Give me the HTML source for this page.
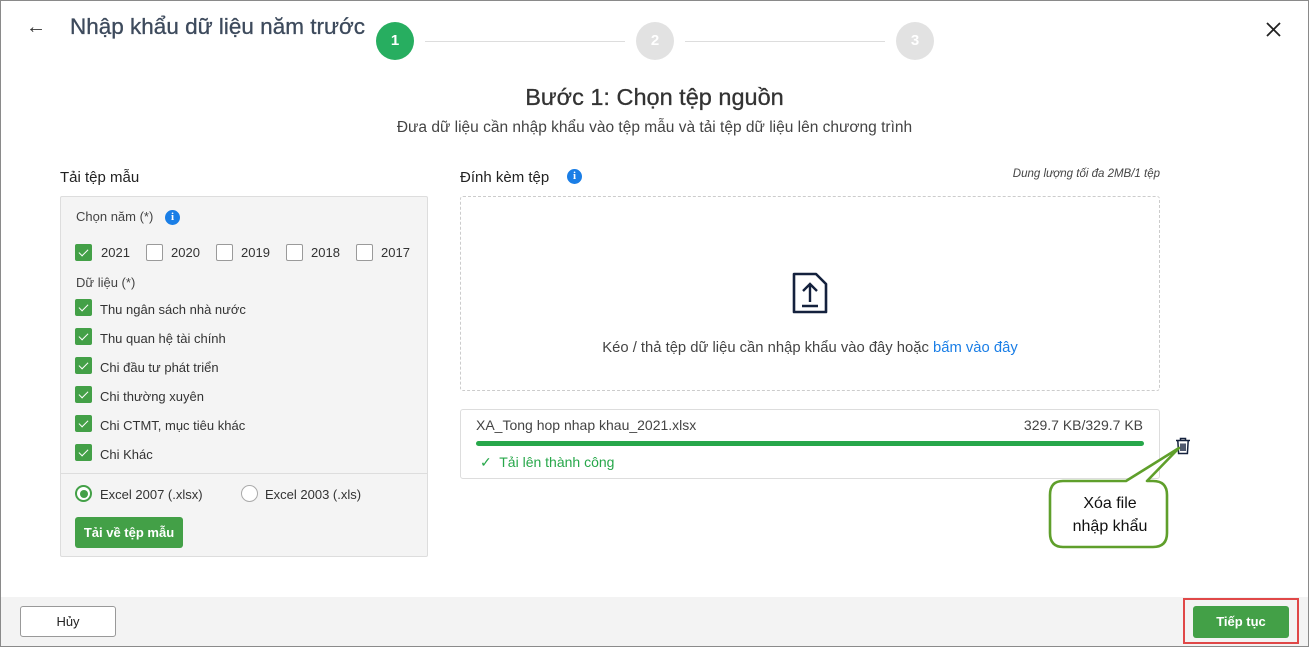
<!DOCTYPE html>
<html><head><meta charset="utf-8"><style>
*{box-sizing:border-box;margin:0;padding:0}
body{width:1309px;height:647px;position:relative;font-family:"Liberation Sans",Roboto,sans-serif;background:#fff;color:#333;overflow:hidden}
.a{position:absolute}
.frame{left:0;top:0;width:1309px;height:647px;border:1px solid #8a8a8a}
.cb{position:absolute;width:17px;height:17px;border-radius:2px;border:1px solid #9a9a9a;background:#fff}
.cb.on{background:#43a047;border-color:#43a047}
.cb.on::after{content:"";position:absolute;left:5px;top:2px;width:4px;height:8px;border:solid #fff;border-width:0 1.5px 1.5px 0;transform:rotate(45deg)}
.t13{font-size:13px;color:#333}
.circ{position:absolute;width:38px;height:38px;border-radius:50%;color:#fff;font-weight:bold;font-size:15px;text-align:center;line-height:38px}
.info{position:absolute;width:15px;height:15px;border-radius:50%;background:#1a7ee6;color:#fff;font-size:11px;font-weight:bold;text-align:center;line-height:15px;font-family:"Liberation Serif",serif}
</style></head><body>
<div class="a frame"></div>
<div class="a" style="left:26px;top:16px;font-size:20px;color:#333">←</div>
<div class="a" style="left:70px;top:14px;font-size:22.5px;color:#3d4a5c;-webkit-text-stroke:0.3px #3d4a5c">Nhập khẩu dữ liệu năm trước</div>
<div class="circ" style="left:376px;top:22px;background:#27ae60">1</div>
<div class="a" style="left:425px;top:41px;width:200px;height:1px;background:#ddd"></div>
<div class="circ" style="left:636px;top:22px;background:#e2e2e2">2</div>
<div class="a" style="left:685px;top:41px;width:200px;height:1px;background:#ddd"></div>
<div class="circ" style="left:896px;top:22px;background:#e2e2e2">3</div>
<svg class="a" style="left:1265px;top:21px" width="17" height="17"><path d="M2 2L15 15M15 2L2 15" stroke="#222" stroke-width="1.8"/></svg>

<div class="a" style="left:0;width:1309px;top:84px;text-align:center;font-size:23.5px;color:#333;-webkit-text-stroke:0.3px #333">Bước 1: Chọn tệp nguồn</div>
<div class="a" style="left:0;width:1309px;top:119px;text-align:center;font-size:15.5px;color:#444">Đưa dữ liệu cần nhập khẩu vào tệp mẫu và tải tệp dữ liệu lên chương trình</div>

<div class="a" style="left:60px;top:169px;font-size:15px;color:#222">Tải tệp mẫu</div>
<div class="a" style="left:60px;top:196px;width:368px;height:361px;background:#f4f4f4;border:1px solid #ddd;border-radius:2px"></div>
<div class="a t13" style="left:76px;top:209px;color:#444">Chọn năm (*)</div>
<div class="info" style="left:165px;top:210px">i</div>
<div class="cb on" style="left:75px;top:244px"></div><div class="a t13" style="left:101px;top:245px">2021</div>
<div class="cb" style="left:146px;top:244px"></div><div class="a t13" style="left:171px;top:245px">2020</div>
<div class="cb" style="left:216px;top:244px"></div><div class="a t13" style="left:241px;top:245px">2019</div>
<div class="cb" style="left:286px;top:244px"></div><div class="a t13" style="left:311px;top:245px">2018</div>
<div class="cb" style="left:356px;top:244px"></div><div class="a t13" style="left:381px;top:245px">2017</div>
<div class="a t13" style="left:76px;top:275px;color:#444">Dữ liệu (*)</div>
<div class="cb on" style="left:75px;top:299px"></div><div class="a t13" style="left:100px;top:302px">Thu ngân sách nhà nước</div>
<div class="cb on" style="left:75px;top:328px"></div><div class="a t13" style="left:100px;top:331px">Thu quan hệ tài chính</div>
<div class="cb on" style="left:75px;top:357px"></div><div class="a t13" style="left:100px;top:360px">Chi đầu tư phát triển</div>
<div class="cb on" style="left:75px;top:386px"></div><div class="a t13" style="left:100px;top:389px">Chi thường xuyên</div>
<div class="cb on" style="left:75px;top:415px"></div><div class="a t13" style="left:100px;top:418px">Chi CTMT, mục tiêu khác</div>
<div class="cb on" style="left:75px;top:444px"></div><div class="a t13" style="left:100px;top:447px">Chi Khác</div>
<div class="a" style="left:61px;top:473px;width:366px;height:1px;background:#ddd"></div>
<div class="a" style="left:75px;top:485px;width:17px;height:17px;border-radius:50%;border:2px solid #43a047;background:#fff"><div style="position:absolute;left:2.5px;top:2.5px;width:8px;height:8px;border-radius:50%;background:#43a047"></div></div>
<div class="a t13" style="left:100px;top:487px">Excel 2007 (.xlsx)</div>
<div class="a" style="left:241px;top:485px;width:17px;height:17px;border-radius:50%;border:1px solid #aaa;background:#fff"></div>
<div class="a t13" style="left:265px;top:487px">Excel 2003 (.xls)</div>
<div class="a" style="left:75px;top:517px;width:108px;height:31px;background:#43a047;border-radius:3px;color:#fff;font-size:13px;font-weight:bold;text-align:center;line-height:31px">Tải về tệp mẫu</div>

<div class="a" style="left:460px;top:169px;font-size:15px;color:#222">Đính kèm tệp</div>
<div class="info" style="left:567px;top:169px">i</div>
<div class="a" style="left:860px;width:300px;top:168px;text-align:right;font-size:11.5px;font-style:italic;color:#444">Dung lượng tối đa 2MB/1 tệp</div>
<div class="a" style="left:460px;top:196px;width:700px;height:195px;border:1px dashed #ccc;border-radius:3px"></div>
<svg class="a" style="left:791px;top:271px" width="38" height="44" viewBox="0 0 38 44"><path d="M3 3H25L35 13V41H3Z" fill="none" stroke="#14213d" stroke-width="2.6" stroke-linejoin="round"/><path d="M19 31V13M12 20L19 13L26 20M11 35H27" fill="none" stroke="#14213d" stroke-width="2.4"/></svg>
<div class="a" style="left:460px;width:700px;top:340px;text-align:center;font-size:14.8px;color:#444">Kéo / thả tệp dữ liệu cần nhập khẩu vào đây hoặc <span style="color:#1a7ee6">bấm vào đây</span></div>

<div class="a" style="left:460px;top:409px;width:700px;height:70px;border:1px solid #ddd;border-radius:3px"></div>
<div class="a" style="left:476px;top:417px;font-size:14px;color:#444">XA_Tong hop nhap khau_2021.xlsx</div>
<div class="a" style="left:900px;width:243px;top:417px;text-align:right;font-size:14px;color:#444">329.7 KB/329.7 KB</div>
<div class="a" style="left:476px;top:441px;width:668px;height:5px;border-radius:3px;background:#27a74a"></div>
<div class="a" style="left:480px;top:454px;font-size:14px;color:#27a74a">✓&nbsp; Tải lên thành công</div>
<svg class="a" style="left:1175px;top:437px" width="16" height="18" viewBox="0 0 16 18"><path d="M1 3.5H15M5.5 3.5V1.5H10.5V3.5M2.8 3.5L3.6 16.5H12.4L13.2 3.5M6 6.5V14M8 6.5V14M10 6.5V14" fill="none" stroke="#14213d" stroke-width="1.5"/></svg>

<svg class="a" style="left:1045px;top:440px" width="140" height="113"><path d="M18 41H81L134 8L102 41H108Q122 41 122 55V93Q122 107 108 107H18Q5 107 5 93V55Q5 41 18 41Z" fill="#fff" stroke="#5f9f2b" stroke-width="2.6" stroke-linejoin="round"/></svg>
<div class="a" style="left:1050px;width:120px;top:492px;text-align:center;font-size:16px;color:#111;line-height:23px">Xóa file<br>nhập khẩu</div>

<div class="a" style="left:1px;top:597px;width:1307px;height:49px;background:#f3f3f3"></div>
<div class="a" style="left:20px;top:606px;width:96px;height:31px;border:1px solid #999;border-radius:3px;background:#fff;text-align:center;line-height:29px;font-size:13px;color:#222">Hủy</div>
<div class="a" style="left:1183px;top:598px;width:116px;height:46px;border:2px solid #e04848"></div>
<div class="a" style="left:1193px;top:606px;width:96px;height:32px;background:#43a047;border-radius:3px;color:#fff;font-size:13px;font-weight:bold;text-align:center;line-height:32px">Tiếp tục</div>
</body></html>
